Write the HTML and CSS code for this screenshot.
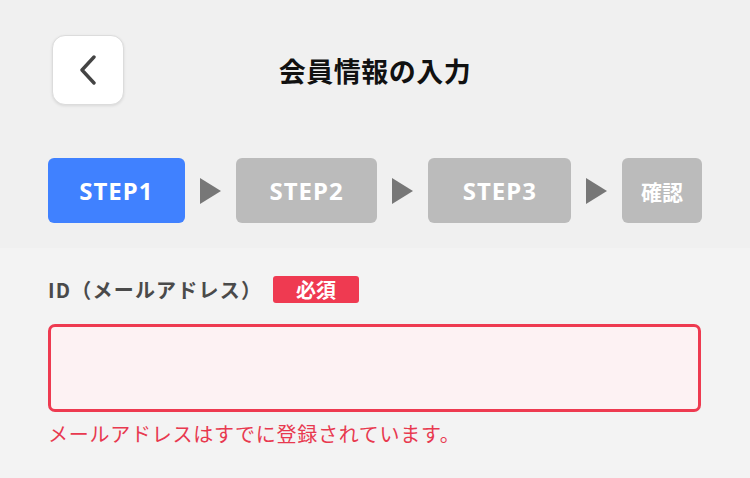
FILE: index.html
```html
<!DOCTYPE html>
<html lang="ja">
<head>
<meta charset="utf-8">
<title>会員情報の入力</title>
<link rel="stylesheet" href="styles.css">
</head>
<body>
<div class="top">
  <header class="header">
    <button class="back" aria-label="戻る">
      <svg width="18" height="30" viewBox="0 0 18 30"><path d="M15 2 L3 15 L15 28" fill="none" stroke="#444" stroke-width="3.4" stroke-linecap="round" stroke-linejoin="round"/></svg>
    </button>
    <h1 class="title">会員情報の入力</h1>
  </header>
  <nav class="steps">
    <div class="step step-active step-1">STEP1</div>
    <span class="arrow"></span>
    <div class="step step-2">STEP2</div>
    <span class="arrow"></span>
    <div class="step step-3">STEP3</div>
    <span class="arrow"></span>
    <div class="step step-confirm">確認</div>
  </nav>
</div>
<main class="form">
  <div class="label-row">
    <span class="label">ID（メールアドレス）</span>
    <span class="badge">必須</span>
  </div>
  <div class="input"></div>
  <p class="error">メールアドレスはすでに登録されています。</p>
</main>
</body>
</html>
```
FILE: styles.css
```css
* { box-sizing: border-box; }
html, body { margin: 0; padding: 0; }
body {
  background: #f3f3f3;
  font-family: "Noto Sans CJK JP", "Noto Sans", sans-serif;
  width: 750px;
  height: 478px;
  overflow: hidden;
}
.top {
  background: #f0f0f0;
  padding: 35px 48px 25px;
  height: 248px;
}
.header {
  display: grid;
  grid-template-columns: 1fr auto 1fr;
  align-items: center;
  padding: 0 4px;
}
.back {
  width: 72px;
  height: 70px;
  background: #fff;
  border: 1px solid #dcdcdc;
  border-radius: 13px;
  box-shadow: 0 1px 3px rgba(0,0,0,0.1);
  display: flex;
  align-items: center;
  justify-content: center;
  padding: 0;
  margin: 0;
}
.title {
  margin: 0;
  font-size: 27px;
  font-weight: 700;
  color: #111;
  line-height: 1;
  letter-spacing: 0.5px;
}
.steps {
  display: flex;
  align-items: center;
  gap: 15px;
  margin-top: 53px;
}
.step {
  height: 65px;
  border-radius: 6px;
  background: #bbbbbb;
  color: #fff;
  font-family: "Noto Sans", "Noto Sans CJK JP", sans-serif;
  font-weight: 700;
  font-size: 24px;
  letter-spacing: 1px;
  display: flex;
  align-items: center;
  justify-content: center;
}
.step-active { background: #4081ff; }
.step-1 { width: 137px; }
.step-2 { width: 142px; }
.step-3 { width: 143px; }
.step-confirm {
  width: 80px;
  font-family: "Noto Sans CJK JP", sans-serif;
  font-size: 21px;
  letter-spacing: 0;
}
.arrow {
  width: 0;
  height: 0;
  border-left: 21px solid #777;
  border-top: 13px solid transparent;
  border-bottom: 13px solid transparent;
}
.form {
  padding: 28px 49px 0 48px;
}
.label-row {
  display: flex;
  align-items: center;
  gap: 11px;
  height: 27px;
}
.label {
  font-size: 20px;
  font-weight: 700;
  color: #4a4a4a;
  line-height: 27px;
  letter-spacing: 1.2px;
}
.badge {
  background: #ef3a51;
  color: #fff;
  font-size: 20px;
  font-weight: 700;
  line-height: 27px;
  height: 27px;
  padding: 0 23px;
  border-radius: 3px;
}
.input {
  margin-top: 21px;
  height: 88px;
  border: 3px solid #ee3a50;
  border-radius: 7px;
  background: #fdf2f3;
}
.error {
  margin: 8px 0 0;
  font-size: 20px;
  line-height: 28px;
  color: #e8394f;
  letter-spacing: 0.75px;
}
```
